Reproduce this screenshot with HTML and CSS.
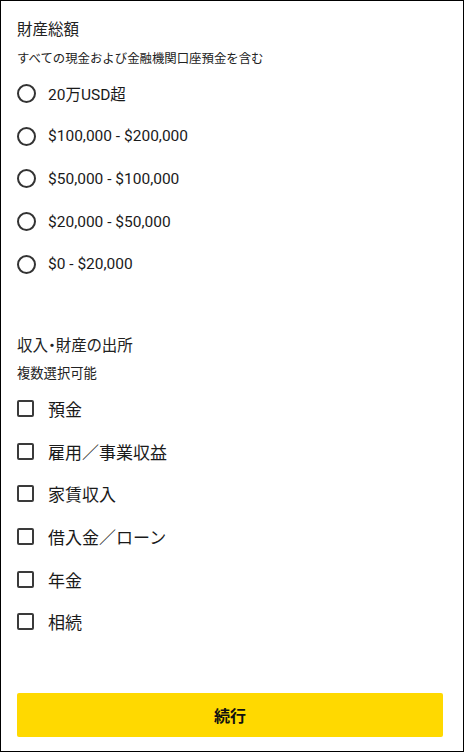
FILE: index.html
```html
<!DOCTYPE html>
<html lang="ja">
<head>
<meta charset="utf-8">
<link rel="stylesheet" href="styles.css">
</head>
<body>
<div class="frame">
  <section class="group group-assets">
    <h2 class="group-title">財産総額</h2>
    <p class="group-note">すべての現金および金融機関口座預金を含む</p>
    <ul class="options radios">
      <li class="option"><span class="radio"></span><span class="label">20万USD超</span></li>
      <li class="option"><span class="radio"></span><span class="label">$100,000 - $200,000</span></li>
      <li class="option"><span class="radio"></span><span class="label">$50,000 - $100,000</span></li>
      <li class="option"><span class="radio"></span><span class="label">$20,000 - $50,000</span></li>
      <li class="option"><span class="radio"></span><span class="label">$0 - $20,000</span></li>
    </ul>
  </section>
  <section class="group group-source">
    <h2 class="group-title">収入・財産の出所</h2>
    <p class="group-note">複数選択可能</p>
    <ul class="options checks">
      <li class="option"><span class="check"></span><span class="label">預金</span></li>
      <li class="option"><span class="check"></span><span class="label">雇用／事業収益</span></li>
      <li class="option"><span class="check"></span><span class="label">家賃収入</span></li>
      <li class="option"><span class="check"></span><span class="label">借入金／ローン</span></li>
      <li class="option"><span class="check"></span><span class="label">年金</span></li>
      <li class="option"><span class="check"></span><span class="label">相続</span></li>
    </ul>
  </section>
  <button class="continue" type="button">続行</button>
</div>
</body>
</html>
```
FILE: styles.css
```css
html, body {
  margin: 0;
  padding: 0;
  background: #fff;
}
body {
  font-family: Roboto, "Noto Sans CJK JP", sans-serif;
  color: #1a1a1a;
}
.frame {
  box-sizing: border-box;
  width: 464px;
  height: 752px;
  border: 1px solid #000;
  padding: 16px 20px 0 16px;
  display: flex;
  flex-direction: column;
}
.group-title {
  margin: 0;
  height: 22px;
  font-family: "Noto Sans CJK JP", sans-serif;
  font-feature-settings: "palt";
  font-size: 15.5px;
  font-weight: 400;
  line-height: 22px;
  color: #222;
}
.group-note {
  margin: 10px 0 0;
  height: 18px;
  font-family: "Noto Sans CJK JP", sans-serif;
  font-size: 12.4px;
  line-height: 18px;
  color: #222;
}
.options {
  list-style: none;
  margin: 5px 0 0;
  padding: 0;
}
.option {
  display: flex;
  align-items: center;
  height: 42.75px;
}
.radio {
  box-sizing: border-box;
  flex: none;
  width: 19px;
  height: 19px;
  border: 2px solid #333;
  border-radius: 50%;
  margin-right: 12px;
}
.radios .label {
  font-size: 15.5px;
  color: #1a1a1a;
}
.group-source {
  margin-top: 47px;
}
.group-source .group-note {
  margin-top: 9px;
  font-size: 13.3px;
}
.checks {
  margin-top: 5.7px;
}
.checks .option {
  height: 42.6px;
}
.check {
  box-sizing: border-box;
  flex: none;
  width: 17px;
  height: 17px;
  border: 2px solid #3a3a3a;
  border-radius: 2px;
  margin-right: 14px;
}
.checks .label {
  font-family: "Noto Sans CJK JP", sans-serif;
  font-size: 17px;
  color: #1a1a1a;
}
.continue {
  margin-top: 49.7px;
  width: 426px;
  height: 44px;
  border: none;
  border-radius: 2px;
  background: #ffd900;
  font-family: "Noto Sans CJK JP", sans-serif;
  font-size: 16px;
  font-weight: 700;
  color: #111;
  padding: 0;
  cursor: pointer;
}
```
